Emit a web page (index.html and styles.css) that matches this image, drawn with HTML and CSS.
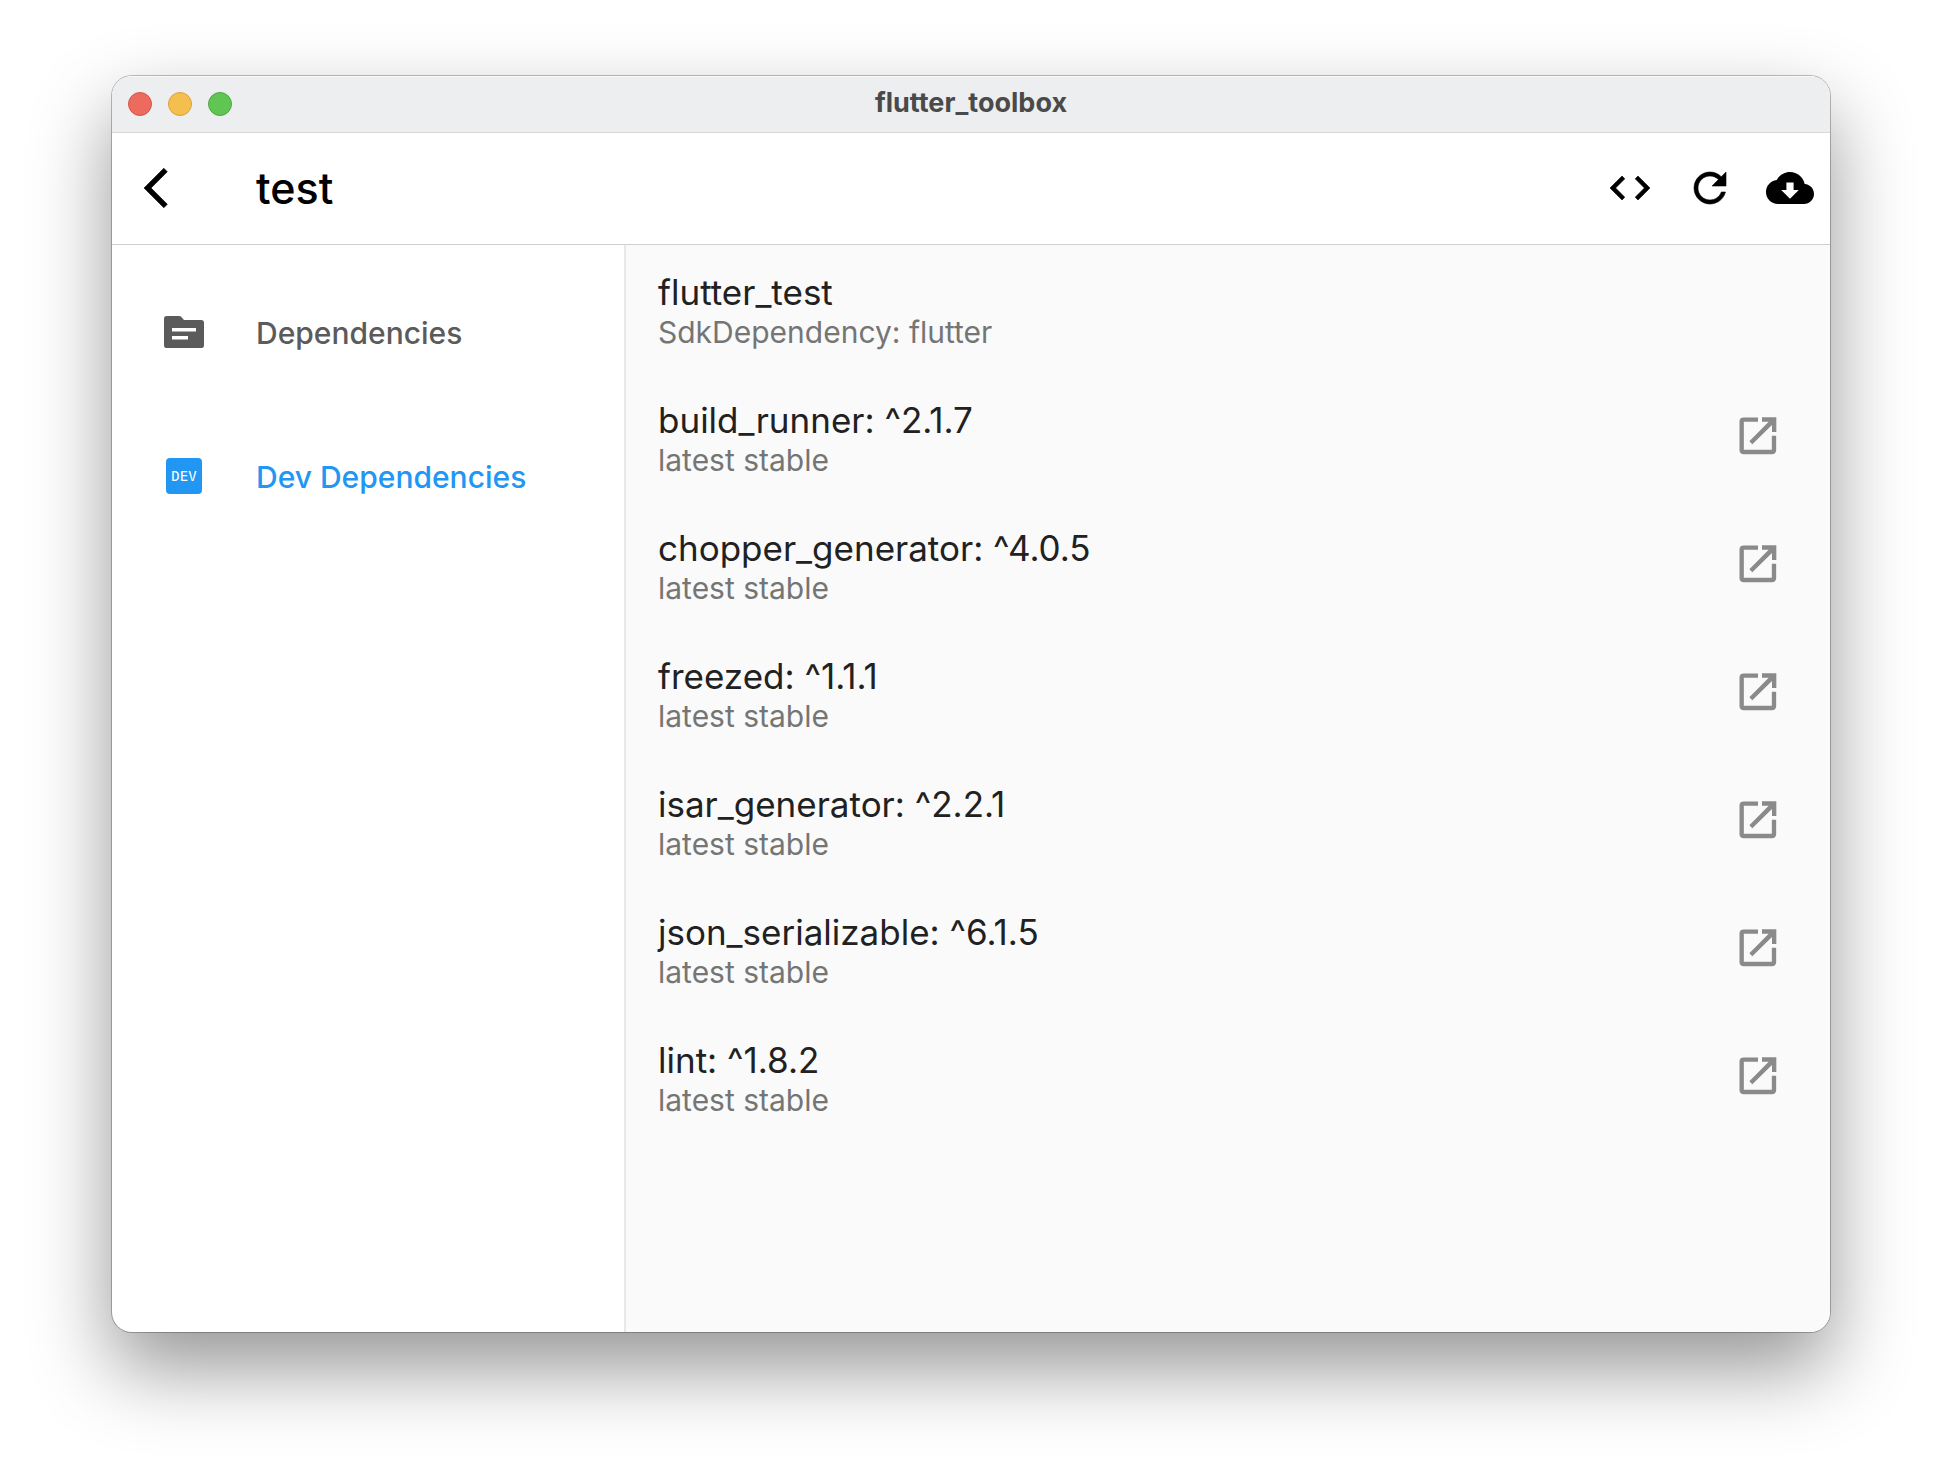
FILE: index.html
```html
<!DOCTYPE html>
<html lang="en">
<head>
<meta charset="utf-8">
<meta name="viewport" content="width=device-width, initial-scale=1">
<title>flutter_toolbox</title>
<link rel="stylesheet" href="styles.css">
</head>
<body>
<svg class="defs" aria-hidden="true">
  <symbol id="open" viewBox="0 0 114 114">
    <path fill="none" stroke="currentColor" stroke-width="13" d="M57 8H14Q8 8 8 14V99Q8 105 14 105H99Q105 105 105 99V56"/>
    <path fill="currentColor" d="M69 1H112V45H99V24L40 82L31 73L89 14H69Z"/>
  </symbol>
</svg>
<div class="window">
  <div class="titlebar">
    <div class="lights">
      <button class="light red" aria-label="Close"></button>
      <button class="light yellow" aria-label="Minimize"></button>
      <button class="light green" aria-label="Zoom"></button>
    </div>
    <div class="window-title">flutter_toolbox</div>
  </div>
  <header class="appbar">
    <button class="icon-button back" aria-label="Back">
      <svg class="icon" viewBox="0 0 24 24"><path d="M11.67 3.87L9.9 2.1 0 12l9.9 9.9 1.77-1.77L3.54 12z" stroke="currentColor" stroke-width=".3"/></svg>
    </button>
    <h1 class="page-title">test</h1>
    <div class="actions">
      <button class="icon-button" aria-label="Code">
        <svg class="icon" viewBox="0 0 24 24"><path d="M9.4 16.6L4.8 12l4.6-4.6L8 6l-6 6 6 6 1.4-1.4zm5.2 0l4.6-4.6-4.6-4.6L16 6l6 6-6 6-1.4-1.4z" stroke="currentColor" stroke-width=".3"/></svg>
      </button>
      <button class="icon-button" aria-label="Refresh">
        <svg class="icon" viewBox="0 0 24 24"><path d="M17.65 6.35C16.2 4.9 14.21 4 12 4c-4.42 0-7.99 3.58-7.99 8s3.57 8 7.99 8c3.73 0 6.84-2.55 7.73-6h-2.08c-.82 2.33-3.04 4-5.65 4-3.31 0-6-2.69-6-6s2.69-6 6-6c1.66 0 3.14.69 4.22 1.78L13 11h7V4l-2.35 2.35z" stroke="currentColor" stroke-width=".3"/></svg>
      </button>
      <button class="icon-button" aria-label="Download">
        <svg class="icon" viewBox="0 0 24 24"><path d="M19.35 10.04C18.67 6.59 15.64 4 12 4 9.11 4 6.6 5.64 5.35 8.04 2.34 8.36 0 10.91 0 14c0 3.31 2.69 6 6 6h13c2.76 0 5-2.24 5-5 0-2.64-2.05-4.78-4.65-4.96zM16.4 13L12 17.4 7.6 13h2.6V9.2h3.6V13z"/></svg>
      </button>
    </div>
  </header>
  <div class="body">
    <nav class="rail">
      <a class="rail-item" href="#dependencies">
        <span class="rail-icon"><svg class="icon" viewBox="0 0 24 24"><path d="M20.6 6H12l-1.2-1.4Q10.3 4 9.5 4H3.400Q2 4 2 5.400V18.600Q2 20 3.400 20H20.600Q22 20 22 18.600V7.400Q22 6 20.600 6zM14 15.800H6v-1.800h8zM18 11.800H6V10h12z"/></svg></span>
        <span class="rail-label">Dependencies</span>
      </a>
      <a class="rail-item selected" href="#dev-dependencies" aria-current="page">
        <span class="rail-icon"><span class="dev-badge">DEV</span></span>
        <span class="rail-label">Dev Dependencies</span>
      </a>
    </nav>
    <main class="content">
      <ul class="list">
        <li class="tile">
          <div class="tile-text"><div class="name">flutter_test</div><div class="detail">SdkDependency: flutter</div></div>
        </li>
        <li class="tile">
          <div class="tile-text"><div class="name">build_runner: ^2.1.7</div><div class="detail">latest stable</div></div>
          <button class="open-button" aria-label="Open build_runner"><svg class="open-icon"><use href="#open"/></svg></button>
        </li>
        <li class="tile">
          <div class="tile-text"><div class="name">chopper_generator: ^4.0.5</div><div class="detail">latest stable</div></div>
          <button class="open-button" aria-label="Open chopper_generator"><svg class="open-icon"><use href="#open"/></svg></button>
        </li>
        <li class="tile">
          <div class="tile-text"><div class="name">freezed: ^1.1.1</div><div class="detail">latest stable</div></div>
          <button class="open-button" aria-label="Open freezed"><svg class="open-icon"><use href="#open"/></svg></button>
        </li>
        <li class="tile">
          <div class="tile-text"><div class="name">isar_generator: ^2.2.1</div><div class="detail">latest stable</div></div>
          <button class="open-button" aria-label="Open isar_generator"><svg class="open-icon"><use href="#open"/></svg></button>
        </li>
        <li class="tile">
          <div class="tile-text"><div class="name">json_serializable: ^6.1.5</div><div class="detail">latest stable</div></div>
          <button class="open-button" aria-label="Open json_serializable"><svg class="open-icon"><use href="#open"/></svg></button>
        </li>
        <li class="tile">
          <div class="tile-text"><div class="name">lint: ^1.8.2</div><div class="detail">latest stable</div></div>
          <button class="open-button" aria-label="Open lint"><svg class="open-icon"><use href="#open"/></svg></button>
        </li>
      </ul>
    </main>
  </div>
</div>
</body>
</html>
```
FILE: styles.css
```css
* {
  box-sizing: border-box;
}

body {
  margin: 0;
  min-height: 100vh;
  padding: 76px 112px 148px;
  display: flex;
  background: #fff;
  color: #212121;
  font-family: Inter, "Liberation Sans", sans-serif;
}

button {
  padding: 0;
  border: 0;
  background: none;
  color: inherit;
  font: inherit;
}

.defs {
  position: absolute;
  width: 0;
  height: 0;
}

.window {
  flex: 1;
  min-width: 0;
  display: flex;
  flex-direction: column;
  overflow: hidden;
  border-radius: 20px;
  background: #fff;
  box-shadow: 0 0 0 1px rgba(0, 0, 0, .25), 0 36px 80px rgba(0, 0, 0, .42);
}

.titlebar {
  height: 56px;
  padding: 0 16px;
  display: grid;
  grid-template-columns: 1fr auto 1fr;
  align-items: center;
  background: #edeeef;
  box-shadow: inset 0 1px #fafafa;
}

.lights {
  display: flex;
  gap: 16px;
}

.light {
  width: 24px;
  height: 24px;
  border: 1px solid;
  border-radius: 50%;
}

.red {
  background: #ec6a5e;
  border-color: #d55549;
}

.yellow {
  background: #f5bf4f;
  border-color: #d9a13c;
}

.green {
  background: #61c554;
  border-color: #4fa73f;
}

.window-title {
  padding-bottom: 2px;
  color: #4a4a4a;
  font-size: 27px;
  font-weight: 700;
  line-height: 32px;
}

.appbar {
  position: relative;
  height: 112px;
  padding: 0 0 2px 32px;
  display: flex;
  align-items: center;
  border-top: 1px solid #d8d8d8;
  box-shadow: 0 1px #cfcfcf;
  color: #000;
}

.icon-button {
  width: 80px;
  height: 80px;
  display: grid;
  place-items: center;
}

.icon {
  display: block;
  width: 48px;
  height: 48px;
  overflow: visible;
  fill: currentColor;
}

.back {
  width: 112px;
  justify-items: start;
}

.page-title {
  flex: 1;
  margin: 0;
  font-size: 43px;
  font-weight: 500;
  line-height: 48px;
}

.actions {
  display: flex;
}

.body {
  flex: 1;
  display: flex;
}

.rail {
  width: 514px;
  padding-top: 16px;
  border-right: 2px solid #e8e8e8;
}

.rail-item {
  height: 144px;
  display: flex;
  align-items: center;
  color: #5b5b5b;
  font-size: 30px;
  font-weight: 500;
  text-decoration: none;
}

.rail-item.selected {
  color: #2196f3;
}

.rail-icon {
  width: 144px;
  display: grid;
  place-items: center;
}

.rail-label {
  padding-top: 2px;
}

.dev-badge {
  width: 36px;
  height: 36px;
  border-radius: 4px;
  background: #2196f3;
  color: #fff;
  font: 14px/36px "DejaVu Sans Mono", monospace;
  text-align: center;
}

.content {
  flex: 1;
  background: #fafafa;
}

.list {
  margin: 0;
  padding: 0;
  list-style: none;
}

.tile {
  height: 128px;
  padding: 0 32px;
  display: flex;
  align-items: center;
  justify-content: space-between;
}

.tile-text {
  align-self: flex-start;
  padding-top: 28px;
}

.name {
  font-size: 35px;
  line-height: 40px;
}

.detail {
  color: #757575;
  font-size: 30px;
  line-height: 40px;
}

.open-button {
  width: 80px;
  height: 80px;
  display: grid;
  place-items: center;
  color: #8a8a8a;
}

.open-icon {
  width: 38px;
  height: 38px;
}
```
